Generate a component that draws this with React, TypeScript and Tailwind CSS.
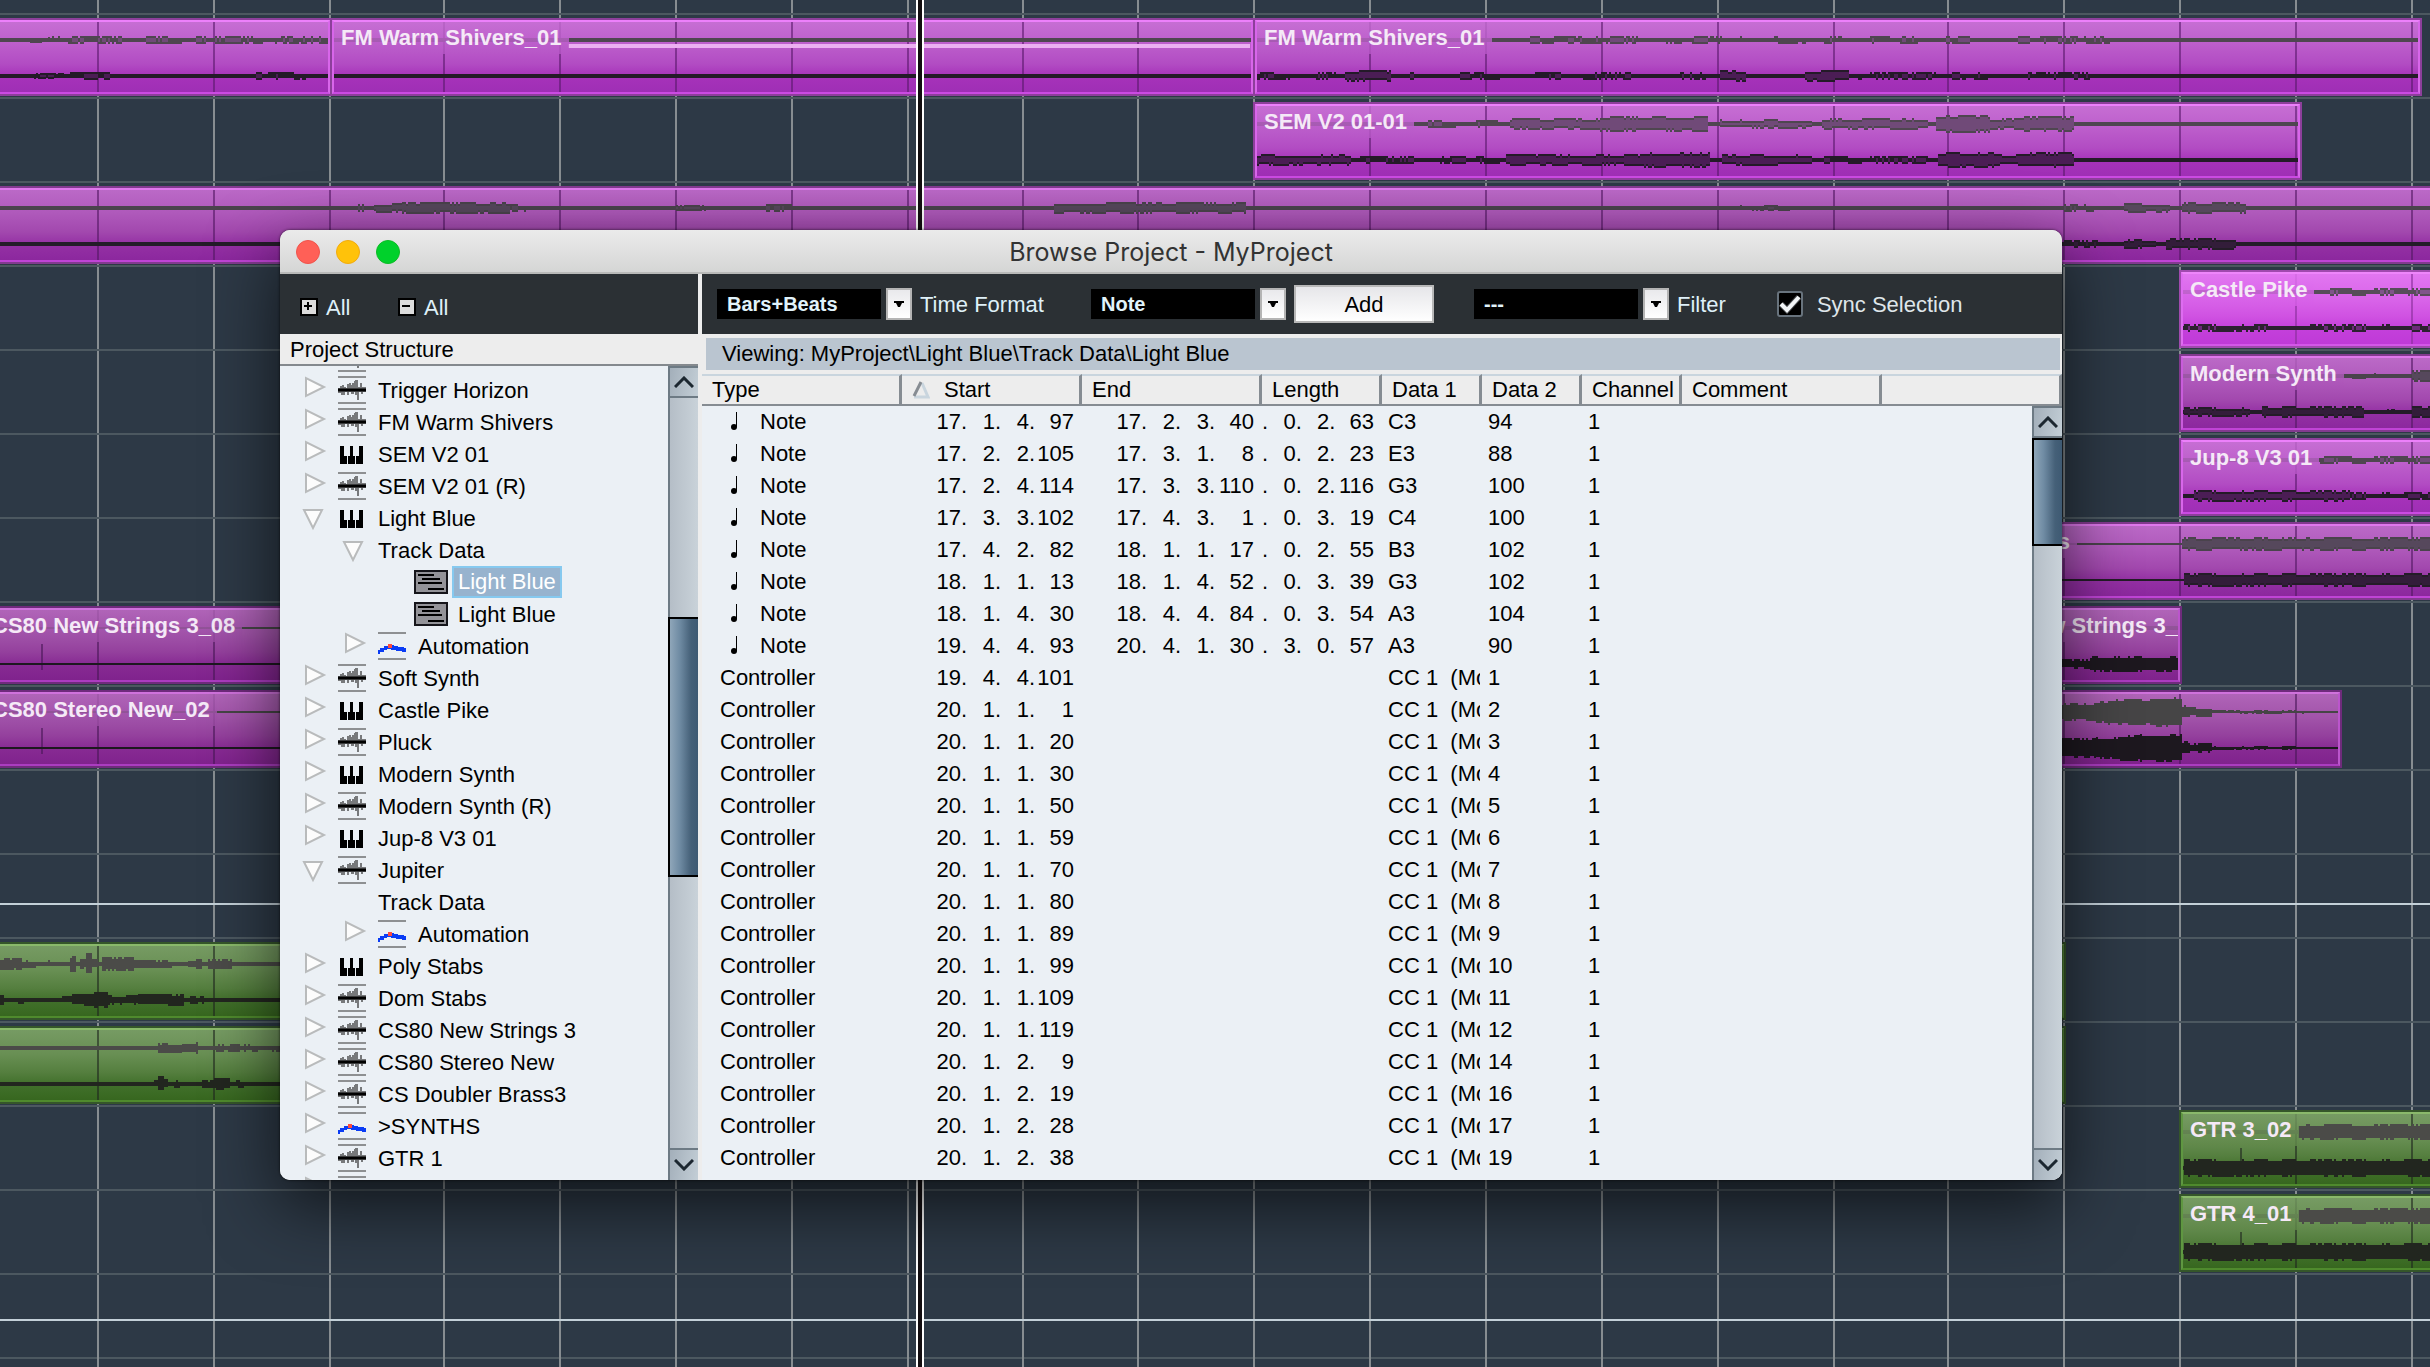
import type { ReactNode } from "react";

type Seg = [number, number, number];
type Tone = "normal" | "dim" | "deep" | "bright" | "green";
type ClipData = {
  from: number;
  to: number;
  name?: string;
  tone: Tone;
  top?: Seg[];
  bottom?: Seg[];
  base?: number;
  ticks?: number[];
  volume?: [number, number];
};

const BARS = [
  98, 214, 330, 444, 560, 676, 792, 908, 1023, 1138, 1254, 1370, 1486, 1602, 1718, 1834, 1948, 2064, 2180, 2296, 2412,
];

const TONES: Record<Tone, { body: string; edge: string; label: string; light: string; lightFill: string; dark: string; darkFill: string; bar: string }> = {
  normal: {
    body: "bg-[linear-gradient(#c66ed3,#bd5fcc_30%,#b24cc3_60%,#a632ba_78%,#9f2fb5)]",
    edge: "border-t-[#ec80fa] border-b-[#cb4ae2] border-x-[#d866ea] outline-[#8d3f9b]",
    label: "bg-[linear-gradient(#c66ed3cc,#b756c7cc)]",
    light: "#4f4650", lightFill: "#704a78", dark: "#241a28", darkFill: "#4b1d55", bar: "#5c1a6e",
  },
  dim: {
    body: "bg-[linear-gradient(#bb69c7,#ae58ba_35%,#a248ae_60%,#9430a4_78%,#8c289e)]",
    edge: "border-t-[#df78ec] border-b-[#c044d6] border-x-[#c95cdb] outline-[#823a8f]",
    label: "bg-[linear-gradient(#bb69c7cc,#a951b5cc)]",
    light: "#4a434c", lightFill: "#56485c", dark: "#241c28", darkFill: "#331d3a", bar: "#541964",
  },
  deep: {
    body: "bg-[linear-gradient(#b064b8,#a153a9_35%,#94409d_60%,#872a93_78%,#80238d)]",
    edge: "border-t-[#cf72dc] border-b-[#ab3cc0] border-x-[#bb55cc] outline-[#6f2b7c]",
    label: "bg-[linear-gradient(#b064b8cc,#9b4ba4cc)]",
    light: "#464546", lightFill: "#464546", dark: "#1d181f", darkFill: "#1d181f", bar: "#4a1858",
  },
  bright: {
    body: "bg-[linear-gradient(#e276f1,#d965e9_35%,#d052e2_60%,#c440db_78%,#bf3ad7)]",
    edge: "border-t-[#ee86fb] border-b-[#d457e8] border-x-[#de6cf0] outline-[#a04aae]",
    label: "bg-[linear-gradient(#e276f1cc,#d55de6cc)]",
    light: "#574d59", lightFill: "#80558a", dark: "#2c2030", darkFill: "#6c2a7a", bar: "#8a2f9c",
  },
  green: {
    body: "bg-[linear-gradient(#769b63,#688f53_35%,#557f3f_60%,#41702b_78%,#37671f)]",
    edge: "border-t-[#8ab96b] border-b-[#4f8a2d] border-x-[#5f9741] outline-[#35562a]",
    label: "bg-[linear-gradient(#769b63cc,#608849cc)]",
    light: "#4b4b48", lightFill: "#4b4b48", dark: "#22261f", darkFill: "#22261f", bar: "#20281f",
  },
};

const TRACKS: ClipData[][] = [
  [
    { from: -20, to: 331, tone: "normal", top: [[30, 50, 3], [50, 122, 4], [146, 205, 4], [215, 262, 4], [275, 328, 4]], bottom: [[34, 64, 3], [70, 110, 4], [256, 262, 4], [268, 305, 4]] },
    { from: 331, to: 1254, name: "FM Warm Shivers_01", tone: "normal", volume: [568, 1250] },
    {
      from: 1254, to: 2421, name: "FM Warm Shivers_01", tone: "normal",
      top: [[1530, 1640, 4], [1666, 1745, 4], [1774, 1845, 4], [1870, 1890, 4], [1900, 1970, 4], [2018, 2030, 4], [2040, 2116, 4]],
      bottom: [[1256, 1290, 4], [1310, 1338, 4], [1345, 1390, 6], [1410, 1436, 4], [1460, 1500, 4], [1535, 1560, 4], [1575, 1630, 4], [1670, 1706, 4], [1720, 1745, 6], [1805, 1848, 6], [1858, 1942, 4], [1952, 1988, 4], [2028, 2090, 4]],
    },
  ],
  [
    {
      from: 1254, to: 2301, name: "SEM V2 01-01", tone: "normal",
      top: [[1418, 1466, 4], [1476, 1510, 4], [1510, 1600, 6], [1600, 1640, 8], [1640, 1708, 8], [1720, 1812, 5], [1822, 1928, 6], [1936, 1990, 9], [1990, 2024, 6], [2024, 2074, 8]],
      bottom: [[1257, 1350, 6], [1360, 1465, 4], [1476, 1500, 4], [1506, 1640, 6], [1640, 1710, 8], [1722, 1812, 6], [1824, 1928, 4], [1938, 1994, 8], [1994, 2030, 6], [2030, 2074, 8]],
    },
  ],
  [
    {
      from: -20, to: 2460, tone: "dim",
      top: [[358, 366, 4], [374, 402, 5], [402, 510, 6], [510, 526, 4], [676, 706, 3], [766, 792, 4], [1054, 1246, 6], [1726, 1790, 3], [2064, 2094, 4], [2124, 2170, 5], [2182, 2246, 6]],
      bottom: [[2064, 2100, 4], [2124, 2156, 5], [2166, 2236, 6]],
    },
  ],
  [{ from: 2180, to: 2460, name: "Castle Pike", tone: "bright", top: [[2330, 2440, 4]], bottom: [[2184, 2272, 4], [2298, 2400, 4], [2412, 2440, 4]] }],
  [{ from: 2180, to: 2460, name: "Modern Synth", tone: "dim", top: [[2352, 2376, 3], [2412, 2440, 6]], bottom: [[2184, 2250, 5], [2262, 2364, 6], [2385, 2395, 3], [2412, 2440, 6]] }],
  [{ from: 2180, to: 2460, name: "Jup-8 V3 01", tone: "normal", top: [[2320, 2440, 4]], bottom: [[2194, 2350, 6], [2350, 2440, 4]] }],
  [{ from: 1945, to: 2460, name: "Dom Stabs", tone: "dim", base: 1, top: [[2182, 2440, 7]], bottom: [[2184, 2440, 7]] }],
  [
    { from: -18, to: 600, name: "CS80 New Strings 3_08", tone: "deep", base: 1, ticks: [41] },
    { from: 1949, to: 2181, name: "CS80 New Strings 3_09", tone: "deep", bottom: [[2060, 2090, 5], [2090, 2182, 8]] },
  ],
  [
    { from: -18, to: 600, name: "CS80 Stereo New_02", tone: "deep", base: 1, ticks: [41] },
    {
      from: 1950, to: 2341, tone: "deep", base: 1,
      top: [[2040, 2096, 9], [2096, 2108, 11], [2108, 2150, 13], [2150, 2182, 15], [2182, 2188, 7], [2188, 2212, 5], [2212, 2304, 2]],
      bottom: [[2040, 2096, 10], [2096, 2120, 11], [2120, 2140, 13], [2140, 2182, 14], [2182, 2188, 7], [2188, 2212, 5], [2212, 2300, 2]],
    },
  ],
  [],
  [],
  [
    { from: -20, to: 2065, tone: "green", top: [[0, 22, 6], [22, 36, 4], [42, 50, 4], [70, 76, 8], [80, 86, 5], [86, 92, 11], [92, 98, 5], [102, 134, 7], [134, 172, 4], [188, 202, 5], [208, 232, 5]], bottom: [[0, 4, 5], [14, 24, 4], [62, 72, 4], [72, 94, 6], [94, 108, 8], [108, 138, 5], [138, 184, 6], [190, 204, 4]] },
  ],
  [
    { from: -20, to: 2065, tone: "green", top: [[158, 182, 5], [182, 198, 6], [216, 224, 4], [228, 258, 4], [272, 280, 4]], bottom: [[154, 158, 4], [158, 164, 8], [164, 168, 5], [174, 180, 4], [202, 214, 4], [214, 230, 6], [236, 244, 4]] },
  ],
  [{ from: 2180, to: 2460, name: "GTR 3_02", tone: "green", top: [[2298, 2440, 8]], bottom: [[2184, 2440, 9]], ticks: [2240] }],
  [{ from: 2180, to: 2460, name: "GTR 4_01", tone: "green", top: [[2298, 2440, 8]], bottom: [[2184, 2440, 9]], ticks: [2240] }],
  [],
];

function hash(n: number) {
  const v = Math.sin(n * 12.9898) * 43758.5453;
  return v - Math.floor(v);
}

function level(x: number, seed: number, amp: number, base: number) {
  const slow = hash(Math.floor(x / 14) + seed);
  const fast = hash(x * 7 + seed);
  return Math.max(base, amp - (slow * 0.6 + fast * 0.4 > 0.5 ? 2 : 0));
}

function wavePath(from: number, to: number, center: number, base: number, segs: Seg[], origin: number, inset: number) {
  let d = "";
  if (inset === 0) d += `M${from - origin} ${center - base}H${to - origin}V${center + base}H${from - origin}Z`;
  for (const [a, b, amp] of segs) {
    for (let x = a; x < b; x += 2) {
      const up = level(x, center, amp, base) - inset;
      const down = level(x, center + 31, amp, base) - inset;
      if (up > 0 && down > 0) d += `M${x - origin} ${center - up}h2v${up + down}h-2z`;
    }
  }
  return d;
}

function Clip({ clip }: { clip: ClipData }) {
  const tone = TONES[clip.tone];
  const { from, to } = clip;
  const width = to - from - 2;
  const origin = from + 3;
  const base = clip.base ?? 2;
  const top = clip.top ?? [];
  const bottom = clip.bottom ?? [];
  return (
    <div
      className={`absolute top-[5px] h-[74px] overflow-hidden border-2 outline-2 ${tone.edge} ${tone.body}`}
      style={{ left: from + 1, width }}
    >
      <svg className="absolute inset-0 h-[70px]" style={{ width: width - 4 }} shapeRendering="crispEdges" aria-hidden="true">
        <g fill={tone.bar} opacity="0.6">
          {BARS.filter((b) => b > from + 4 && b < to - 4).map((b) => (
            <rect key={b} x={b - 1 - origin} y="0" width="2" height="70" />
          ))}
          {clip.ticks?.map((b) => <rect key={b} x={b - origin} y="34" width="2" height="26" />)}
        </g>
        <path d={wavePath(from, to, 18, base, top, origin, 0)} fill={tone.light} />
        <path d={wavePath(from, to, 18, base, top, origin, 2)} fill={tone.lightFill} />
        {clip.volume && (
          <rect x={clip.volume[0] - origin} y="22" width={clip.volume[1] - clip.volume[0]} height="4" fill="#ecb0f1" />
        )}
        <path d={wavePath(from, to, 54, base, bottom, origin, 0)} fill={tone.dark} />
        <path d={wavePath(from, to, 54, base, bottom, origin, 2)} fill={tone.darkFill} />
      </svg>
      {clip.name && (
        <span className={`relative inline-block h-8 px-[7px] text-[22px] leading-8 font-bold whitespace-nowrap text-[#f5e9f7] ${tone.label}`}>
          {clip.name}
        </span>
      )}
    </div>
  );
}

function Timeline() {
  return (
    <div className="relative h-full overflow-hidden bg-[#2d3946] pt-[13px]">
      <svg className="absolute inset-0 size-full" aria-hidden="true">
        {BARS.map((b) => (
          <rect key={b} x={b - 1} y="0" width="2" height="100%" fill="#878d91" />
        ))}
      </svg>
      {TRACKS.map((clips, i) => (
        <div key={i} className="relative h-[84px] border-t-2 border-[#4c5860]">
          {(i === 10 || i === 15) && (
            <div className={`absolute inset-x-0 h-[2px] bg-[#c3d0d8] ${i === 10 ? "top-[48px]" : "top-[44px]"}`} />
          )}
          {clips.map((clip) => (
            <Clip key={clip.from} clip={clip} />
          ))}
        </div>
      ))}
      <div className="border-t-2 border-[#4c5860]" />
      <div className="absolute inset-y-0 left-[916px] w-2 border-x-2 border-white bg-[#120d10]" />
    </div>
  );
}

type IconKind = "audio" | "midi" | "auto" | "part" | "none";
type Node = { label: string; icon: IconKind; depth: 0 | 1 | 2; open?: boolean; leaf?: boolean; selected?: boolean };

const TREE: Node[] = [
  { label: "", icon: "audio", depth: 0 },
  { label: "Trigger Horizon", icon: "audio", depth: 0 },
  { label: "FM Warm Shivers", icon: "audio", depth: 0 },
  { label: "SEM V2 01", icon: "midi", depth: 0 },
  { label: "SEM V2 01 (R)", icon: "audio", depth: 0 },
  { label: "Light Blue", icon: "midi", depth: 0, open: true },
  { label: "Track Data", icon: "none", depth: 1, open: true },
  { label: "Light Blue", icon: "part", depth: 2, leaf: true, selected: true },
  { label: "Light Blue", icon: "part", depth: 2, leaf: true },
  { label: "Automation", icon: "auto", depth: 1 },
  { label: "Soft Synth", icon: "audio", depth: 0 },
  { label: "Castle Pike", icon: "midi", depth: 0 },
  { label: "Pluck", icon: "audio", depth: 0 },
  { label: "Modern Synth", icon: "midi", depth: 0 },
  { label: "Modern Synth (R)", icon: "audio", depth: 0 },
  { label: "Jup-8 V3 01", icon: "midi", depth: 0 },
  { label: "Jupiter", icon: "audio", depth: 0, open: true },
  { label: "Track Data", icon: "none", depth: 1, leaf: true },
  { label: "Automation", icon: "auto", depth: 1 },
  { label: "Poly Stabs", icon: "midi", depth: 0 },
  { label: "Dom Stabs", icon: "audio", depth: 0 },
  { label: "CS80 New Strings 3", icon: "audio", depth: 0 },
  { label: "CS80 Stereo New", icon: "audio", depth: 0 },
  { label: "CS Doubler Brass3", icon: "audio", depth: 0 },
  { label: ">SYNTHS", icon: "auto", depth: 0 },
  { label: "GTR 1", icon: "audio", depth: 0 },
  { label: "", icon: "audio", depth: 0 },
];

function TreeIcon({ kind }: { kind: IconKind }) {
  if (kind === "audio")
    return (
      <svg width="28" height="32" viewBox="0 0 28 32" aria-hidden="true">
        <path d="M0 3h28M0 29h28" stroke="#8e9092" strokeWidth="2" />
        <path d="M0 14h2v-2h2v-1h2v2h2v1h1v-4h2V9h2v2h1v-2h2V7h1v-1h3v7h2v-4h2v4h4v5h-3v2h-2v-2h-2v8h-2v-5h-2v-3h-1v2h-3v-2h-2v3h-2v-3H7v3H3v-2H0z" fill="#77797b" />
        <path d="M0 16h28" stroke="#000" strokeWidth="3" />
      </svg>
    );
  if (kind === "midi")
    return (
      <svg width="28" height="32" viewBox="0 0 28 32" aria-hidden="true">
        <path d="M2 8h4v10h3v8H2zM12 8h3v10h2v8h-7v-8h2zM21 8h4v18h-7v-8h3z" fill="#000" />
      </svg>
    );
  if (kind === "auto")
    return (
      <svg width="28" height="32" viewBox="0 0 28 32" aria-hidden="true">
        <path d="M0 3h28M0 29h28" stroke="#8e9092" strokeWidth="2" />
        <path d="M0 20h2v-2h4v-2h4v-1h6v1h4v1h6v1h2v4h-4v-1h-6v-1h-5v-1H9v1H6v2H2v2H0z" fill="#0a3cf5" />
        <rect x="10" y="14" width="4" height="4" fill="#ff4b3e" />
      </svg>
    );
  if (kind === "part")
    return (
      <svg width="34" height="24" viewBox="0 0 34 24" aria-hidden="true">
        <rect x="1" y="1" width="32" height="22" fill="#939398" stroke="#15151a" strokeWidth="2" />
        <path d="M4 5h16M8 9h18M4 13h24M14 19h16" stroke="#000" strokeWidth="2" />
      </svg>
    );
  return null;
}

function Disclosure({ open }: { open?: boolean }) {
  return (
    <button type="button" aria-label={open ? "Collapse" : "Expand"} className="h-8 w-[33px] shrink-0">
      <svg className="overflow-visible" width="24" height="32" viewBox="0 0 24 32" aria-hidden="true">
        <path d={open ? "M-1 8H17L8 26Z" : "M1 4V22L19 13Z"} fill="#fcfcfc" stroke="#b9bbbc" strokeWidth="2" />
      </svg>
    </button>
  );
}

const INDENT = ["pl-[25px]", "pl-[65px]", "pl-[134px]"];

function TreeRow({ node }: { node: Node }) {
  const trackData = node.icon === "none";
  return (
    <li className={`flex h-8 items-center ${INDENT[node.depth]}`}>
      {!node.leaf && <Disclosure open={node.open} />}
      {trackData && node.leaf && <span className="w-[33px]" />}
      {node.icon !== "none" && <TreeIcon kind={node.icon} />}
      <span
        className={
          node.selected
            ? "ml-1 border-2 border-[#86c9ef] bg-[#97b3ce] px-1 leading-7 text-white"
            : node.icon === "part"
              ? "ml-[10px]"
              : trackData
                ? ""
                : "ml-3"
        }
      >
        {node.label}
      </span>
    </li>
  );
}

function ScrollBar({ thumb, label }: { thumb: string; label: string }) {
  const cap = "grid h-8 w-full shrink-0 place-items-center border-[#6d7a84] bg-[linear-gradient(100deg,#a3afba,#c3ced6)]";
  return (
    <div role="group" aria-label={label} className="flex h-full w-[30px] flex-col border-l-2 border-[#6d7a84] bg-[linear-gradient(90deg,#b5bec7,#c9d2d9)]">
      <button type="button" aria-label="Scroll up" className={`${cap} border-y-2`}>
        <svg width="20" height="12" viewBox="0 0 20 12" fill="none" stroke="#1c2730" strokeWidth="3" aria-hidden="true">
          <path d="M1 11l9-9 9 9" />
        </svg>
      </button>
      <div className="min-h-0 grow">
        <div className={`-ml-[2px] border-y-2 border-l-2 border-black bg-[linear-gradient(90deg,#8fa6b9,#6f8ba3_35%,#456078_75%,#3e5a73)] ${thumb}`} />
      </div>
      <button type="button" aria-label="Scroll down" className={`${cap} border-t-2`}>
        <svg width="20" height="12" viewBox="0 0 20 12" fill="none" stroke="#1c2730" strokeWidth="3" aria-hidden="true">
          <path d="M1 1l9 9 9-9" />
        </svg>
      </button>
    </div>
  );
}

function AllButton({ sign }: { sign: "plus" | "minus" }) {
  return (
    <button type="button" className="flex items-center gap-2 text-[22px] text-[#dff0f8]">
      <svg width="18" height="18" viewBox="0 0 18 18" aria-hidden="true">
        <rect x="1" y="1" width="16" height="16" fill="#dcdcdc" stroke="#000" strokeWidth="2" />
        <path d={sign === "plus" ? "M4 8h8M8 4v8" : "M4 8h8"} stroke="#000" strokeWidth="2" />
      </svg>
      All
    </button>
  );
}

function Picker({ id, value, label, hideLabel }: { id: string; value: string; label: string; hideLabel?: boolean }) {
  return (
    <div className="flex items-center">
      <div className="relative flex items-center">
        <select
          id={id}
          defaultValue={value}
          className="mr-[31px] h-[30px] w-[164px] appearance-none bg-black px-[10px] text-xl leading-[30px] font-bold text-[#e1f3fb]"
        >
          <option>{value}</option>
        </select>
        <span className="pointer-events-none absolute right-0 grid h-8 w-[26px] place-items-center border-2 border-[#b4b4b4] bg-[linear-gradient(#e9e9ec,#fff)]">
          <svg width="10" height="6" viewBox="0 0 10 6" aria-hidden="true">
            <path d="M0 0h10v2H8L6 6H4L2 2H0z" />
          </svg>
        </span>
      </div>
      <label htmlFor={id} className={hideLabel ? "sr-only" : "ml-2 text-[22px] text-[#dff0f8]"}>
        {label}
      </label>
    </div>
  );
}

type Row = { type: "Note" | "Controller"; start: string; end?: string; length?: string; d1: string; d2: string };

const note = (start: string, end: string, length: string, d1: string, d2: string): Row => ({ type: "Note", start, end, length, d1, d2 });
const cc = (start: string, d2: string): Row => ({ type: "Controller", start, d1: "CC 1  (Mo", d2 });

const ROWS: Row[] = [
  note("17.1.4.97", "17.2.3.40", ".0.2.63", "C3", "94"),
  note("17.2.2.105", "17.3.1.8", ".0.2.23", "E3", "88"),
  note("17.2.4.114", "17.3.3.110", ".0.2.116", "G3", "100"),
  note("17.3.3.102", "17.4.3.1", ".0.3.19", "C4", "100"),
  note("17.4.2.82", "18.1.1.17", ".0.2.55", "B3", "102"),
  note("18.1.1.13", "18.1.4.52", ".0.3.39", "G3", "102"),
  note("18.1.4.30", "18.4.4.84", ".0.3.54", "A3", "104"),
  note("19.4.4.93", "20.4.1.30", ".3.0.57", "A3", "90"),
  cc("19.4.4.101", "1"),
  cc("20.1.1.1", "2"),
  cc("20.1.1.20", "3"),
  cc("20.1.1.30", "4"),
  cc("20.1.1.50", "5"),
  cc("20.1.1.59", "6"),
  cc("20.1.1.70", "7"),
  cc("20.1.1.80", "8"),
  cc("20.1.1.89", "9"),
  cc("20.1.1.99", "10"),
  cc("20.1.1.109", "11"),
  cc("20.1.1.119", "12"),
  cc("20.1.2.9", "14"),
  cc("20.1.2.19", "16"),
  cc("20.1.2.28", "17"),
  cc("20.1.2.38", "19"),
];

function Position({ value }: { value?: string }) {
  if (!value) return null;
  const [bar, beat, sub, tick] = value.split(".");
  return (
    <span className="flex justify-end pr-2">
      <span>{bar}.</span>
      <span className="w-[34px] text-right">{beat}.</span>
      <span className="w-[34px] text-right">{sub}.</span>
      <span className="w-[39px] text-right">{tick}</span>
    </span>
  );
}

function Head({ children }: { children?: ReactNode }) {
  return (
    <th
      scope="col"
      className="overflow-hidden border-t-2 border-r-[3px] border-b-2 border-t-[#c9d5de] border-r-[#868c92] border-b-[#868c92] bg-[#ededed] p-0 pl-[10px] text-left align-top leading-7 font-normal whitespace-nowrap"
    >
      {children}
    </th>
  );
}

function EventTable() {
  return (
    <table className="w-full table-fixed border-separate border-spacing-0 text-[22px] leading-8 text-black">
      <colgroup>
        <col className="w-[200px]" />
        <col className="w-[180px]" />
        <col className="w-[180px]" />
        <col className="w-[120px]" />
        <col className="w-[100px]" />
        <col className="w-[100px]" />
        <col className="w-[100px]" />
        <col className="w-[200px]" />
        <col />
      </colgroup>
      <thead>
        <tr className="h-8">
          <Head>Type</Head>
          <Head>
            <span className="flex items-center gap-[14px]">
              <svg width="18" height="18" viewBox="0 0 18 18" fill="none" strokeWidth="3" aria-hidden="true">
                <path d="M10 2l6 14H2" stroke="#c9d5de" />
                <path d="M9 1L2 15" stroke="#868c92" />
              </svg>
              Start
            </span>
          </Head>
          <Head>End</Head>
          <Head>Length</Head>
          <Head>Data 1</Head>
          <Head>Data 2</Head>
          <Head>Channel</Head>
          <Head>Comment</Head>
          <Head />
        </tr>
      </thead>
      <tbody className="align-top">
        {ROWS.map((row, i) => (
          <tr key={i} className="h-8">
            <td className="p-0">
              {row.type === "Note" ? (
                <span className="flex items-center pl-7">
                  <svg width="30" height="20" viewBox="0 0 30 20" aria-hidden="true">
                    <path d="M6 0h1v15H6z" />
                    <ellipse cx="4" cy="15" rx="3" ry="3" />
                  </svg>
                  Note
                </span>
              ) : (
                <span className="pl-[18px]">Controller</span>
              )}
            </td>
            <td className="p-0"><Position value={row.start} /></td>
            <td className="p-0"><Position value={row.end} /></td>
            <td className="overflow-hidden p-0"><Position value={row.length} /></td>
            <td className="p-0 pr-[2px] pl-[6px]">
              <span className="block overflow-hidden whitespace-pre">{row.d1}</span>
            </td>
            <td className="p-0 pl-[6px]">{row.d2}</td>
            <td className="p-0 pl-[6px]">1</td>
            <td className="p-0" />
            <td className="p-0" />
          </tr>
        ))}
      </tbody>
    </table>
  );
}

function TitleBar() {
  const dot = "size-6 rounded-full border";
  return (
    <header className="flex h-11 shrink-0 items-center border-b-2 border-[#b9bab9] bg-[linear-gradient(#ebebeb,#d5d6d5)] px-4 pt-[2px]">
      <div className="flex flex-1 gap-4">
        <button type="button" aria-label="Close" className={`${dot} border-[#f0534b] bg-[#ff6057]`} />
        <button type="button" aria-label="Minimize" className={`${dot} border-[#f2ab0c] bg-[#ffc20a]`} />
        <button type="button" aria-label="Zoom" className={`${dot} border-[#0cbb25] bg-[#00d12b]`} />
      </div>
      <h1 className="pt-[2px] font-[Inter,sans-serif] text-[25px] text-[#333]">Browse Project - MyProject</h1>
      <div className="flex-1" />
    </header>
  );
}

function BrowserWindow() {
  return (
    <section
      aria-label="Browse Project"
      className="absolute top-[230px] right-[368px] left-[280px] flex h-[950px] flex-col overflow-hidden rounded-[10px] bg-[#ededed] shadow-[0_24px_70px_rgba(0,0,0,0.65),0_0_3px_rgba(0,0,0,0.7)]"
    >
      <TitleBar />
      <div className="flex min-h-0 grow gap-1">
        <aside className="flex w-[418px] shrink-0 flex-col">
          <div className="flex h-[60px] shrink-0 items-center gap-[46px] bg-[#2b3034] pt-[6px] pl-5">
            <span className="w-[52px]"><AllButton sign="plus" /></span>
            <AllButton sign="minus" />
          </div>
          <h2 className="h-8 shrink-0 border-b-2 border-[#84898e] bg-[#ededed] pl-[10px] text-[22px] leading-8 text-black">Project Structure</h2>
          <div className="flex min-h-0 grow bg-[#ebf0f5]">
            <div className="h-full min-w-0 grow overflow-hidden">
              <ul className="-mt-6 text-[22px] whitespace-nowrap text-black">
                {TREE.map((node, i) => (
                  <TreeRow key={i} node={node} />
                ))}
              </ul>
            </div>
            <ScrollBar label="Project structure scroll bar" thumb="mt-[219px] h-[260px]" />
          </div>
        </aside>
        <div className="flex min-w-0 grow flex-col">
          <div className="flex h-[60px] shrink-0 items-center bg-[#2b3034] pl-[15px]">
            <div className="w-[374px]"><Picker id="time-format" value="Bars+Beats" label="Time Format" /></div>
            <Picker id="event-type" value="Note" label="Event type" hideLabel />
            <button type="button" className="ml-2 h-[38px] w-[140px] border-2 border-[#b8b8b8] bg-[linear-gradient(#e6e6e9,#fff)] text-[22px] text-black">
              Add
            </button>
            <div className="ml-10"><Picker id="filter" value="---" label="Filter" /></div>
            <label className="ml-[51px] flex items-center gap-[14px] text-[22px] text-[#dfe6ea]">
              <span className="relative grid size-[26px]">
                <input type="checkbox" defaultChecked className="size-[26px] appearance-none rounded-[3px] border-2 border-[#68737d] bg-black" />
                <svg className="pointer-events-none absolute inset-0" width="26" height="26" viewBox="0 0 26 26" fill="none" aria-hidden="true">
                  <path d="M4 13l6 6L22 6" stroke="#8b9298" strokeWidth="6" opacity="0.5" />
                  <path d="M4 13l6 6L22 6" stroke="#f2f5f7" strokeWidth="4" />
                </svg>
              </span>
              Sync Selection
            </label>
          </div>
          <p className="mt-1 mr-[2px] mb-1 ml-1 h-8 shrink-0 bg-[#bac5d0] pl-4 text-[22px] leading-8 text-black">
            Viewing: MyProject\Light Blue\Track Data\Light Blue
          </p>
          <div className="relative min-h-0 grow overflow-hidden bg-[#ebf0f5]">
            <EventTable />
            <div className="absolute top-8 right-0 bottom-0">
              <ScrollBar label="Event list scroll bar" thumb="h-[108px]" />
            </div>
          </div>
        </div>
      </div>
    </section>
  );
}

export default function App() {
  return (
    <main className="relative h-screen overflow-hidden font-['Liberation_Sans',Arial,sans-serif]">
      <Timeline />
      <BrowserWindow />
    </main>
  );
}
